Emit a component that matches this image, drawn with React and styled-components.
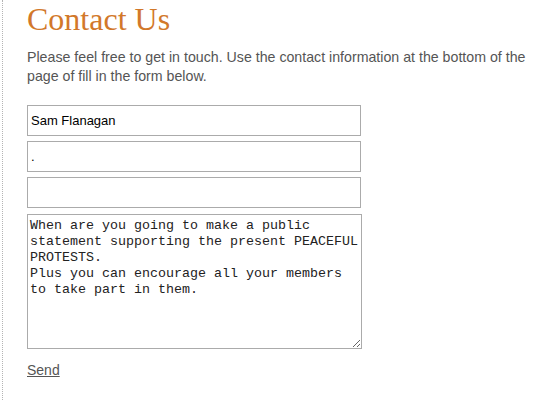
import React from "react"
import { styled, createGlobalStyle } from "styled-components";

const GlobalStyle = createGlobalStyle`
    html, body {
        margin: 0;
        padding: 0;
        background: #fff;
    }
`

const Page = styled.main`
    margin-left: 2px;
    min-height: 400px;
    border-left: 1px dotted #b4b4b4;
    padding: 0 3px 0 24px;
    font-family: "Liberation Sans", Arial, sans-serif;
    color: #555;
`

const Title = styled.h1`
    margin: 0;
    padding-top: 1px;
    font-family: "Liberation Serif", Georgia, serif;
    font-weight: normal;
    font-size: 32px;
    line-height: 36px;
    color: #d2782a;
`

const Intro = styled.p`
    margin: 11px 0 0;
    font-size: 14.2px;
    line-height: 19px;
`

const Form = styled.form`
    display: flex;
    flex-direction: column;
    align-items: flex-start;
    gap: 5px;
    margin-top: 19px;
`

const Field = styled.input`
    box-sizing: border-box;
    width: 334px;
    height: 31px;
    margin: 0;
    padding: 0 3px;
    border: 1px solid #ababab;
    font-family: "Liberation Sans", Arial, sans-serif;
    font-size: 13px;
    color: #000;
    outline: none;
`

const Message = styled.textarea`
    box-sizing: border-box;
    width: 335px;
    height: 135px;
    margin: 1px 0 0;
    padding: 3px 2px;
    border: 1px solid #ababab;
    font-family: "Liberation Mono", "Courier New", monospace;
    font-size: 13.33px;
    line-height: 16px;
    color: #222;
    overflow: hidden;
    outline: none;
`

const SendLink = styled.a`
    margin-top: 8px;
    font-size: 14px;
    color: #555;
    text-decoration: underline;
    cursor: pointer;
`

const ContactUs = () => {
    return (
        <Page>
            <Title>Contact Us</Title>
            <Intro>
                Please feel free to get in touch. Use the contact information at the bottom of the page of fill in the form below.
            </Intro>
            <Form>
                <Field type="text" defaultValue="Sam Flanagan" />
                <Field type="text" defaultValue="." />
                <Field type="text" defaultValue="" />
                <Message
                    defaultValue={"When are you going to make a public statement supporting the present PEACEFUL PROTESTS.\nPlus you can encourage all your members to take part in them."}
                />
                <SendLink>Send</SendLink>
            </Form>
        </Page>
    )
}

const App = () => (
    <>
        <GlobalStyle />
        <ContactUs />
    </>
)

export default App;
